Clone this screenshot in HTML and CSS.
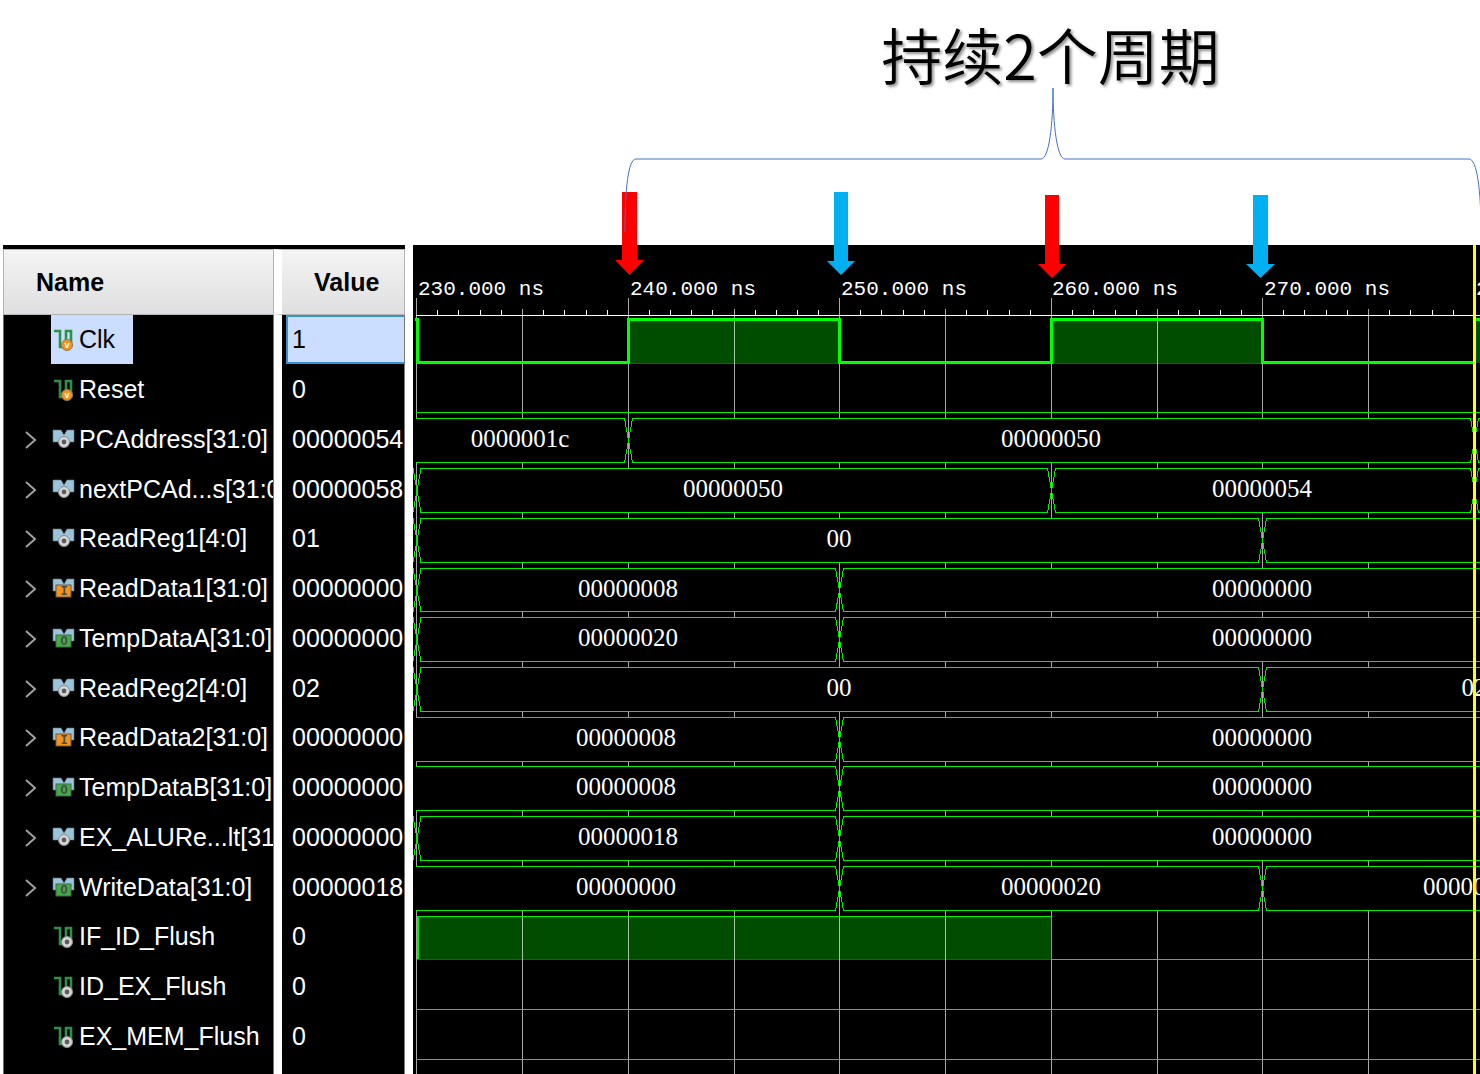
FILE: index.html
```html
<!DOCTYPE html>
<html lang="zh-CN">
<head>
<meta charset="utf-8">
<title>持续2个周期</title>
<link rel="stylesheet" href="styles.css">
</head>
<body>
<svg class="defs" aria-hidden="true">
  <defs>
    <g id="pulse"><path d="M2 4H8V20H14V4H19V20" fill="none" stroke="#2f9148" stroke-width="2.600"/></g>
    <g id="flags"><path d="M1 3H9L12 8L15 3H22V15H1Z" fill="#9bc3da" stroke="#5f7885" stroke-width="0.6"/></g>
    <g id="dot"><circle r="5.5" fill="#d6d6d6" stroke="#8a8a8a"/><circle r="2.4" fill="#5c5c5c"/></g>
    <symbol id="scalar-v" viewBox="0 0 24 24"><use href="#pulse"/><circle cx="15" cy="18" r="5.5" fill="#f6921e" stroke="#8c7a62"/><text x="15" y="21" class="badge-v">v</text></symbol>
    <symbol id="scalar-s" viewBox="0 0 24 24"><use href="#pulse"/><use href="#dot" x="15" y="18"/></symbol>
    <symbol id="bus-s" viewBox="0 0 24 24"><use href="#flags"/><use href="#dot" x="12" y="15"/></symbol>
    <symbol id="bus-i" viewBox="0 0 24 24"><use href="#flags"/><rect x="4" y="9" width="15" height="12" fill="#f6921e" stroke="#6b5a45"/><text x="12" y="19" class="badge-io">I</text></symbol>
    <symbol id="bus-o" viewBox="0 0 24 24"><use href="#flags"/><rect x="4" y="9" width="15" height="12" fill="#43ab48" stroke="#3f6b45"/><text x="12" y="19" class="badge-io">O</text></symbol>
    <symbol id="chevron" viewBox="0 0 12 20"><path d="M1 2L10 10L1 18" fill="none" stroke="#a0a0a0" stroke-width="2"/></symbol>
  </defs>
</svg>

<header class="banner">
  <h1 class="caption">持续2个周期</h1>
  <svg class="marks" width="880" height="290" aria-hidden="true">
    <path fill="#f00" d="M22 192H37V260H44L29.500 275L15 260H22Z"/>
    <path fill="#00b0f0" d="M234 192H248V261H255L241 275L227 261H234Z"/>
    <path fill="#f00" d="M445 195H459V264H466L452 278L438 264H445Z"/>
    <path fill="#00b0f0" d="M653 195H668V264H675L660.500 278L646 264H653Z"/>
    <path class="brace" d="M25 232C25 190 28 159 36 159H441C449 159 453 125 453 88C453 125 457 159 465 159H869C877 159 881 190 881 232"/>
  </svg>
</header>

<main class="viewer">
  <table class="signals">
    <thead><tr><th class="name" scope="col">Name</th><th class="value" scope="col">Value</th></tr></thead>
    <tbody>
      <tr class="selected"><td><div class="signal"><span class="label"><svg class="icon"><use href="#scalar-v"/></svg>Clk</span></div></td><td><div class="reading">1</div></td></tr>
      <tr><td><div class="signal"><span class="label"><svg class="icon"><use href="#scalar-v"/></svg>Reset</span></div></td><td><div class="reading">0</div></td></tr>
      <tr><td><div class="signal"><button class="expand" aria-label="Expand PCAddress"><svg class="chevron"><use href="#chevron"/></svg></button><span class="label"><svg class="icon"><use href="#bus-s"/></svg>PCAddress[31:0]</span></div></td><td><div class="reading">00000054</div></td></tr>
      <tr><td><div class="signal"><button class="expand" aria-label="Expand nextPCAddress"><svg class="chevron"><use href="#chevron"/></svg></button><span class="label"><svg class="icon"><use href="#bus-s"/></svg>nextPCAd...s[31:0]</span></div></td><td><div class="reading">00000058</div></td></tr>
      <tr><td><div class="signal"><button class="expand" aria-label="Expand ReadReg1"><svg class="chevron"><use href="#chevron"/></svg></button><span class="label"><svg class="icon"><use href="#bus-s"/></svg>ReadReg1[4:0]</span></div></td><td><div class="reading">01</div></td></tr>
      <tr><td><div class="signal"><button class="expand" aria-label="Expand ReadData1"><svg class="chevron"><use href="#chevron"/></svg></button><span class="label"><svg class="icon"><use href="#bus-i"/></svg>ReadData1[31:0]</span></div></td><td><div class="reading">00000000</div></td></tr>
      <tr><td><div class="signal"><button class="expand" aria-label="Expand TempDataA"><svg class="chevron"><use href="#chevron"/></svg></button><span class="label"><svg class="icon"><use href="#bus-o"/></svg>TempDataA[31:0]</span></div></td><td><div class="reading">00000000</div></td></tr>
      <tr><td><div class="signal"><button class="expand" aria-label="Expand ReadReg2"><svg class="chevron"><use href="#chevron"/></svg></button><span class="label"><svg class="icon"><use href="#bus-s"/></svg>ReadReg2[4:0]</span></div></td><td><div class="reading">02</div></td></tr>
      <tr><td><div class="signal"><button class="expand" aria-label="Expand ReadData2"><svg class="chevron"><use href="#chevron"/></svg></button><span class="label"><svg class="icon"><use href="#bus-i"/></svg>ReadData2[31:0]</span></div></td><td><div class="reading">00000000</div></td></tr>
      <tr><td><div class="signal"><button class="expand" aria-label="Expand TempDataB"><svg class="chevron"><use href="#chevron"/></svg></button><span class="label"><svg class="icon"><use href="#bus-o"/></svg>TempDataB[31:0]</span></div></td><td><div class="reading">00000000</div></td></tr>
      <tr><td><div class="signal"><button class="expand" aria-label="Expand EX_ALUResult"><svg class="chevron"><use href="#chevron"/></svg></button><span class="label"><svg class="icon"><use href="#bus-s"/></svg>EX_ALURe...lt[31:0]</span></div></td><td><div class="reading">00000000</div></td></tr>
      <tr><td><div class="signal"><button class="expand" aria-label="Expand WriteData"><svg class="chevron"><use href="#chevron"/></svg></button><span class="label"><svg class="icon"><use href="#bus-o"/></svg>WriteData[31:0]</span></div></td><td><div class="reading">00000018</div></td></tr>
      <tr><td><div class="signal"><span class="label"><svg class="icon"><use href="#scalar-s"/></svg>IF_ID_Flush</span></div></td><td><div class="reading">0</div></td></tr>
      <tr><td><div class="signal"><span class="label"><svg class="icon"><use href="#scalar-s"/></svg>ID_EX_Flush</span></div></td><td><div class="reading">0</div></td></tr>
      <tr><td><div class="signal"><span class="label"><svg class="icon"><use href="#scalar-s"/></svg>EX_MEM_Flush</span></div></td><td><div class="reading">0</div></td></tr>
    </tbody>
  </table>

  <section class="waves" aria-label="Waveforms">
    <svg class="plot" width="1200" height="829">
      <!-- high levels -->
      <path class="high" d="M215 75H426V118H215ZM638 75H849V118H638ZM1061 75H1200V118H1061ZM4 672H638V714H4Z"/>
      <path class="base" d="M215 118.500H426M638 118.500H849M4 714.500H638"/>

      <!-- time grid -->
      <path class="grid" d="M3.500 53V829M109.500 64V829M215.500 53V829M321.500 64V829M426.500 53V829M532.500 64V829M638.500 53V829M744.500 64V829M849.500 53V829M955.500 64V829M1061.500 53V829"/>
      <path class="ruler" d="M3 70.500H1200M24.500 65V70M45.500 65V70M67.500 65V70M88.500 65V70M130.500 65V70M151.500 65V70M173.500 65V70M194.500 65V70M236.500 65V70M257.500 65V70M278.500 65V70M299.500 65V70M342.500 65V70M363.500 65V70M384.500 65V70M405.500 65V70M447.500 65V70M468.500 65V70M490.500 65V70M511.500 65V70M553.500 65V70M574.500 65V70M596.500 65V70M617.500 65V70M659.500 65V70M680.500 65V70M702.500 65V70M723.500 65V70M765.500 65V70M786.500 65V70M807.500 65V70M828.500 65V70M870.500 65V70M891.500 65V70M913.500 65V70M934.500 65V70M976.500 65V70M997.500 65V70M1019.500 65V70M1040.500 65V70"/>
      <g class="time">
        <text x="5" y="50">230.000 ns</text><text x="217" y="50">240.000 ns</text><text x="428" y="50">250.000 ns</text><text x="639" y="50">260.000 ns</text><text x="851" y="50">270.000 ns</text><text x="1063" y="50">280.000 ns</text>
      </g>

      <!-- single-bit signals -->
      <path class="clock" d="M2 74.500H4.500V117.500H215.500V74.500H426.500V117.500H638.500V74.500H849.500V117.500H1061.500V74.500H1200"/>
      <path class="trace" d="M3 167.500H1200M4.500 714V671.500H638.500V714.500H1200M3 764.500H1200M3 814.500H1200"/>
      <path class="trace" d="M5.500 672V714"/>

      <!-- buses -->
      <g class="bus" transform="translate(0 173.500)"><path d="M3 0H211.500L215.500 22L211.500 44H3M219.500 0H1057.500L1061.500 22L1057.500 44H219.500L215.500 22ZM1200 0H1065.500L1061.500 22L1065.500 44H1200"/><text x="107" y="28">0000001c</text><text x="638" y="28">00000050</text></g>
      <g class="bus" transform="translate(0 223.500)"><path d="M0 0L4 22L0 44M8 0H634.500L638.500 22L634.500 44H8L4 22ZM642.500 0H1057.500L1061.500 22L1057.500 44H642.500L638.500 22ZM1200 0H1065.500L1061.500 22L1065.500 44H1200"/><text x="320" y="28">00000050</text><text x="849" y="28">00000054</text></g>
      <g class="bus" transform="translate(0 273.500)"><path d="M0 0L4 22L0 44M8 0H845.500L849.500 22L845.500 44H8L4 22ZM1200 0H853.500L849.500 22L853.500 44H1200"/><text x="426" y="28">00</text></g>
      <g class="bus" transform="translate(0 323.500)"><path d="M0 0L4 22L0 44M8 0H422.500L426.500 22L422.500 43H8L4 22ZM1200 0H430.500L426.500 22L430.500 43H1200"/><text x="215" y="28">00000008</text><text x="849" y="28">00000000</text></g>
      <g class="bus" transform="translate(0 372.500)"><path d="M0 0L4 22L0 44M8 0H422.500L426.500 22L422.500 44H8L4 22ZM1200 0H430.500L426.500 22L430.500 44H1200"/><text x="215" y="28">00000020</text><text x="849" y="28">00000000</text></g>
      <g class="bus" transform="translate(0 422.500)"><path d="M0 0L4 22L0 44M8 0H845.500L849.500 22L845.500 44H8L4 22ZM1200 0H853.500L849.500 22L853.500 44H1200"/><text x="426" y="28">00</text><text x="1061" y="28">02</text></g>
      <g class="bus" transform="translate(0 472.500)"><path d="M3 0H422.500L426.500 22L422.500 44H3M1200 0H430.500L426.500 22L430.500 44H1200"/><text x="213" y="28">00000008</text><text x="849" y="28">00000000</text></g>
      <g class="bus" transform="translate(0 521.500)"><path d="M3 0H422.500L426.500 22L422.500 44H3M1200 0H430.500L426.500 22L430.500 44H1200"/><text x="213" y="28">00000008</text><text x="849" y="28">00000000</text></g>
      <g class="bus" transform="translate(0 571.500)"><path d="M0 0L4 22L0 44M8 0H422.500L426.500 22L422.500 44H8L4 22ZM1200 0H430.500L426.500 22L430.500 44H1200"/><text x="215" y="28">00000018</text><text x="849" y="28">00000000</text></g>
      <g class="bus" transform="translate(0 621.500)"><path d="M3 0H422.500L426.500 22L422.500 44H3M430.500 0H845.500L849.500 22L845.500 44H430.500L426.500 22ZM1200 0H853.500L849.500 22L853.500 44H1200"/><text x="213" y="28">00000000</text><text x="638" y="28">00000020</text><text x="1060" y="28">00000018</text></g>

      <rect class="cursor" x="1060" y="0" width="3" height="829"/>
    </svg>
  </section>
</main>
</body>
</html>
```
FILE: styles.css
```css
* { box-sizing: border-box; }

body {
  margin: 0;
  background: #fff;
  color: #000;
  font: 25px/30px "Liberation Sans", Arial, sans-serif;
  overflow-x: hidden;
}

.defs { position: absolute; width: 0; height: 0; }

/* caption and callouts */
.banner {
  position: relative;
  height: 245px;
  padding: 10px 0 0 621px;
}

.caption {
  margin: 0;
  text-align: center;
  font: 350 61px/88px "Noto Sans CJK SC", sans-serif;
  text-shadow: 2px 2px 3px rgba(0, 0, 0, 0.45);
}

.marks {
  position: absolute;
  top: 0;
  left: 600px;
  z-index: 1;
}

.brace { fill: none; stroke: #4472c4; stroke-width: 1; }

/* signal list */
.viewer {
  display: flex;
  gap: 8px;
  padding-left: 3px;
}

.signals {
  flex: none;
  width: 402px;
  table-layout: fixed;
  border-spacing: 0;
  border-top: 4px solid #000;
}

.signals th {
  height: 66px;
  padding: 0 32px;
  border: 1px solid #b4b4b6;
  background: linear-gradient(#f4f4f4, #dfdfe1) padding-box;
  text-align: left;
  font-weight: bold;
}

.signals .name { width: 271px; }

.signals td {
  height: 50px;
  padding: 0;
  background: #000;
  color: #fff;
  overflow: hidden;
  white-space: nowrap;
  vertical-align: top;
  border-right: 1px solid #777;
}

.signals tr:nth-child(4n) td { height: 49px; }
.signals tr:last-child td { height: 62px; }
.signals td:first-child { border-left: 1px solid #4472c4; }

.signals th:last-child,
.signals td:last-child { border-left: 8px solid #fff; }

.signal {
  display: flex;
  width: 269px;
  height: 49px;
  overflow: hidden;
}

.expand {
  flex: none;
  display: flex;
  align-items: center;
  width: 47px;
  padding: 0 0 0 21px;
  border: 0;
  background: none;
}

.chevron { width: 12px; height: 20px; }

.label {
  flex: none;
  display: flex;
  align-items: center;
  gap: 3px;
  height: 49px;
  padding: 0 18px 2px 1px;
}

.label:first-child { margin-left: 47px; }

.icon { flex: none; width: 24px; height: 24px; }

.reading {
  height: 49px;
  margin-left: 4px;
  padding-left: 4px;
  border: 2px solid transparent;
  border-right: 0;
  line-height: 44px;
}

.selected .label { background: #ccdeff; color: #000; }
.selected .reading { background: #ccdeff; color: #000; border-color: #3a8fd0; }

.badge-v { font: bold 9px "Liberation Sans", sans-serif; fill: #fff; text-anchor: middle; }
.badge-io { font: bold 12px "Liberation Mono", monospace; fill: #4a4a4a; text-anchor: middle; }

/* waveforms */
.waves {
  flex: 1;
  min-width: 0;
  overflow: hidden;
  background: #000;
}

.plot { display: block; }
.plot path { fill: none; shape-rendering: crispEdges; }
.plot .high { fill: #004d00; }
.plot .base { stroke: #007000; }
.plot .grid { stroke: rgba(255, 255, 255, 0.66); }
.plot .ruler { stroke: #fff; }
.plot .clock { stroke: #0f0; stroke-width: 3; }
.plot .trace { stroke: #00f000; }
.plot .bus path { fill: #000; stroke: #00f000; }
.cursor { fill: #ff0; }

.time text { font: 21px "Liberation Mono", monospace; fill: #fff; }
.bus text { font: 25px "Liberation Serif", serif; fill: #fff; text-anchor: middle; }
```
